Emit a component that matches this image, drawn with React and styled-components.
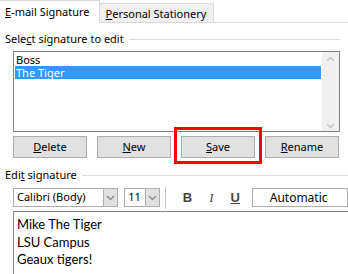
import styled, { createGlobalStyle } from "styled-components";

const Global = createGlobalStyle`
  html, body { margin: 0; padding: 0; background: #fff; }
  body { font-family: "Noto Sans", "Open Sans", sans-serif; font-size: 11px; color: #000; }
`;

const Page = styled.div`
  width: 348px;
  height: 274px;
  overflow: hidden;
  background: #fff;
  display: flex;
  flex-direction: column;
`;

const TabBar = styled.div`
  display: flex;
  align-items: flex-end;
  height: 22px;
  border-bottom: 1px solid #d9d9d9;
`;

const Tab = styled.div`
  box-sizing: border-box;
  height: ${(p) => (p.$active ? "23px" : "19px")};
  margin-bottom: ${(p) => (p.$active ? "-1px" : "0")};
  padding: ${(p) => (p.$active ? "3px 9px 0 5px" : "2px 7px 0 6px")};
  background: ${(p) => (p.$active ? "#fff" : "#f0f0f0")};
  border: 1px solid #d9d9d9;
  border-left-width: 0;
  border-bottom: none;
  line-height: 16px;
  white-space: nowrap;
`;

const Key = styled.span`
  text-decoration: underline;
  text-underline-offset: 1px;
`;

const Body = styled.div`
  display: flex;
  flex-direction: column;
  padding: 9px 0 0 5px;
`;

const GroupTitle = styled.div`
  display: flex;
  align-items: center;
  gap: 5px;
  height: 14px;
  line-height: 14px;
  padding-right: ${(p) => p.$pad || 0}px;
  &::after {
    content: "";
    flex: 1;
    height: 1px;
    background: #dcdcdc;
  }
`;

const Indent = styled.div`
  display: flex;
  flex-direction: column;
  padding-left: 8px;
`;

const ListBox = styled.div`
  box-sizing: border-box;
  margin-top: 5px;
  width: 327px;
  height: 81px;
  border: 1px solid #828282;
  display: flex;
`;

const ListItems = styled.div`
  flex: 1;
  padding: 1px 1px 0 1px;
`;

const ListItem = styled.div`
  height: 13px;
  line-height: 13px;
  padding-left: 1px;
  overflow: hidden;
  background: ${(p) => (p.$selected ? "#3399ff" : "transparent")};
  color: ${(p) => (p.$selected ? "#fff" : "#000")};
`;

const ScrollBar = styled.div`
  width: 17px;
  background: #f0f0f0;
  display: flex;
  flex-direction: column;
  justify-content: space-between;
  align-items: center;
  padding: 4px 0 2px;
`;

const ButtonRow = styled.div`
  display: flex;
  gap: 10px;
  margin-top: 4px;
  width: 327px;
`;

const ButtonWrap = styled.div`
  position: relative;
  display: flex;
`;

const Button = styled.div`
  box-sizing: border-box;
  width: 74px;
  height: 22px;
  background: #e1e1e1;
  border: 1px solid #adadad;
  display: flex;
  align-items: center;
  justify-content: center;
  line-height: 14px;
`;

const Highlight = styled.div`
  position: absolute;
  left: -7px;
  right: -7px;
  top: -9px;
  bottom: -6px;
  border: 3px solid #ff0000;
  pointer-events: none;
`;

const EditTitle = styled(GroupTitle)`
  margin-top: 10px;
`;

const Toolbar = styled.div`
  display: flex;
  align-items: center;
  margin-top: 6px;
  height: 19px;
`;

const Select = styled.div`
  box-sizing: border-box;
  width: ${(p) => p.$w}px;
  height: 19px;
  border: 1px solid #adadad;
  display: flex;
  margin-right: 6px;
`;

const SelectText = styled.div`
  flex: 1;
  padding-left: 3px;
  line-height: 16px;
  white-space: nowrap;
  overflow: hidden;
`;

const SelectBtn = styled.div`
  width: 13px;
  background: #e1e1e1;
  border-left: 1px solid #adadad;
  display: flex;
  align-items: center;
  justify-content: center;
`;

const Separator = styled.div`
  width: 1px;
  height: 22px;
  background: #c8c8c8;
  margin: 0 10px 0 -1px;
`;

const FmtBtn = styled.div`
  width: 25px;
  text-align: center;
  color: #444;
  font-family: ${(p) => (p.$serif ? '"Liberation Serif", serif' : '"Liberation Sans", sans-serif')};
  font-weight: ${(p) => (p.$bold ? 700 : 400)};
  font-style: ${(p) => (p.$italic ? "italic" : "normal")};
  text-decoration: ${(p) => (p.$under ? "underline" : "none")};
  font-size: 13px;
  line-height: 16px;
`;

const ColorBox = styled.div`
  box-sizing: border-box;
  margin-left: 5px;
  width: 100px;
  height: 19px;
  border: 1px solid #adadad;
  display: flex;
  align-items: center;
  justify-content: center;
  padding-right: 3px;
  font-size: 12px;
`;

const Editor = styled.div`
  box-sizing: border-box;
  margin-top: 4px;
  width: 340px;
  height: 70px;
  border-top: 1px solid #828790;
  border-left: 1px solid #828790;
  padding: 4px 0 0 3px;
  font-family: "Lato", "Open Sans", sans-serif;
  font-size: 13px;
  line-height: 17.5px;
`;

const Chevron = ({ up, color = "#c2c2c2" }) => (
  <svg width="9" height="6" viewBox="0 0 9 6">
    <path
      d={up ? "M1 5 L4.5 1.5 L8 5" : "M1 1 L4.5 4.5 L8 1"}
      fill="none"
      stroke={color}
      strokeWidth="1.4"
    />
  </svg>
);

export default function App() {
  return (
    <Page>
      <Global />
      <TabBar>
        <Tab $active>
          <Key>E</Key>-mail Signature
        </Tab>
        <Tab>
          <Key>P</Key>ersonal Stationery
        </Tab>
      </TabBar>
      <Body>
        <GroupTitle $pad={8}>
          <span>
            Sele<Key>c</Key>t signature to edit
          </span>
        </GroupTitle>
        <Indent>
          <ListBox>
            <ListItems>
              <ListItem>Boss</ListItem>
              <ListItem $selected>The Tiger</ListItem>
            </ListItems>
            <ScrollBar>
              <Chevron up />
              <Chevron />
            </ScrollBar>
          </ListBox>
          <ButtonRow>
            <ButtonWrap>
              <Button>
                <span>
                  <Key>D</Key>elete
                </span>
              </Button>
            </ButtonWrap>
            <ButtonWrap>
              <Button>
                <span>
                  <Key>N</Key>ew
                </span>
              </Button>
            </ButtonWrap>
            <ButtonWrap>
              <Button>
                <span>
                  <Key>S</Key>ave
                </span>
              </Button>
              <Highlight />
            </ButtonWrap>
            <ButtonWrap>
              <Button>
                <span>
                  <Key>R</Key>ename
                </span>
              </Button>
            </ButtonWrap>
          </ButtonRow>
        </Indent>
        <EditTitle>
          <span>
            Edi<Key>t</Key> signature
          </span>
        </EditTitle>
        <Indent>
          <Toolbar>
            <Select $w={110}>
              <SelectText>Calibri (Body)</SelectText>
              <SelectBtn>
                <Chevron color="#8a8a8a" />
              </SelectBtn>
            </Select>
            <Select $w={37}>
              <SelectText>11</SelectText>
              <SelectBtn>
                <Chevron color="#8a8a8a" />
              </SelectBtn>
            </Select>
            <Separator />
            <FmtBtn $bold>B</FmtBtn>
            <FmtBtn $italic $serif>I</FmtBtn>
            <FmtBtn $bold $under>U</FmtBtn>
            <ColorBox>Automatic</ColorBox>
          </Toolbar>
          <Editor>
            <div>Mike The Tiger</div>
            <div>LSU Campus</div>
            <div>Geaux tigers!</div>
          </Editor>
        </Indent>
      </Body>
    </Page>
  );
}
